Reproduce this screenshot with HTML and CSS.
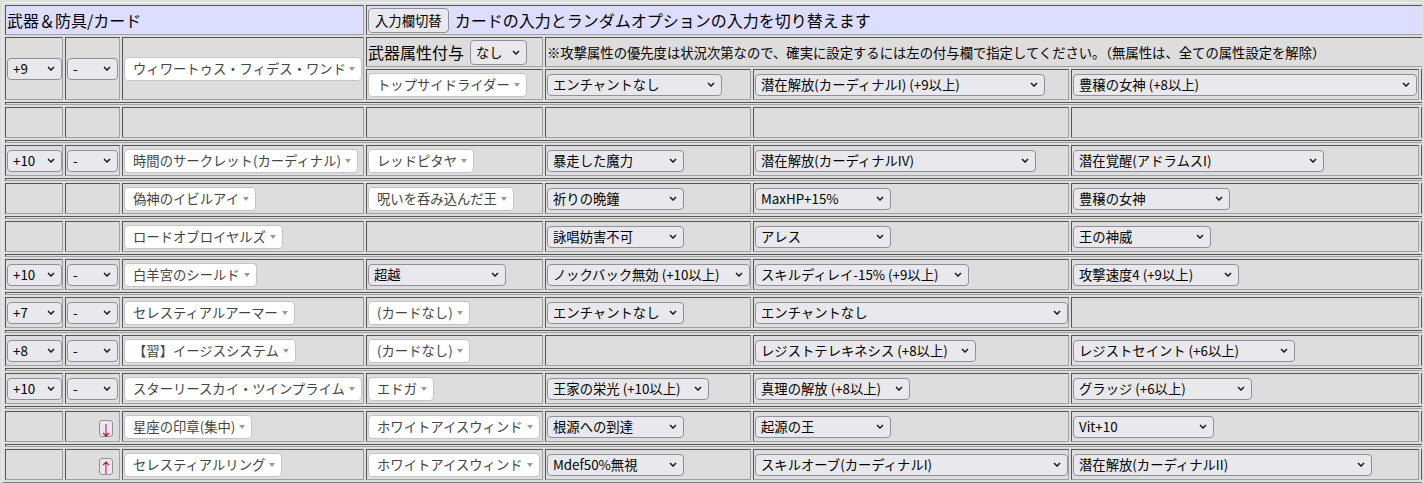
FILE: index.html
```html
<!DOCTYPE html>
<html>
<head>
    <meta charset="utf-8">
    <title>武器＆防具/カード</title>
    <link rel="stylesheet" href="styles.css">
</head>
<body>
    <div class="equip">
        <div class="cell head span3">武器＆防具/カード</div>
        <div class="cell head span5"><span class="btn">入力欄切替</span>カードの入力とランダムオプションの入力を切り替えます</div>

        <!-- 武器 -->
        <div class="cell rs"><span class="sel" style="width:55px">+9<svg class="chev" viewBox="0 0 8 5"><path d="M1 1l3 3 3-3"/></svg></span></div>
        <div class="cell rs"><span class="sel" style="width:51px">-<svg class="chev" viewBox="0 0 8 5"><path d="M1 1l3 3 3-3"/></svg></span></div>
        <div class="cell rs"><span class="dd"><span class="txt">ウィワートゥス・フィデス・ワンド</span><i class="tri"></i></span></div>
        <div class="cell h30 label">武器属性付与<span class="sel tall" style="width:57px">なし<svg class="chev" viewBox="0 0 8 5"><path d="M1 1l3 3 3-3"/></svg></span></div>
        <div class="cell h30 note span4">※攻撃属性の優先度は状況次第なので、確実に設定するには左の付与欄で指定してください。（無属性は、全ての属性設定を解除）</div>
        <div class="cell"><span class="dd"><span class="txt">トップサイドライダー</span><i class="tri"></i></span></div>
        <div class="cell"><span class="sel" style="width:175px">エンチャントなし<svg class="chev" viewBox="0 0 8 5"><path d="M1 1l3 3 3-3"/></svg></span></div>
        <div class="cell"><span class="sel" style="width:290px">潜在解放(カーディナルI) (+9以上)<svg class="chev" viewBox="0 0 8 5"><path d="M1 1l3 3 3-3"/></svg></span></div>
        <div class="cell"><span class="sel" style="width:344px">豊穣の女神 (+8以上)<svg class="chev" viewBox="0 0 8 5"><path d="M1 1l3 3 3-3"/></svg></span></div>
        <div class="cell"></div>
        <div class="sep"></div>

        <!-- 空欄 -->
        <div class="cell"></div>
        <div class="cell"></div>
        <div class="cell"></div>
        <div class="cell"></div>
        <div class="cell"></div>
        <div class="cell"></div>
        <div class="cell"></div>
        <div class="cell"></div>
        <div class="sep"></div>

        <!-- 頭上段 -->
        <div class="cell"><span class="sel" style="width:55px">+10<svg class="chev" viewBox="0 0 8 5"><path d="M1 1l3 3 3-3"/></svg></span></div>
        <div class="cell"><span class="sel" style="width:51px">-<svg class="chev" viewBox="0 0 8 5"><path d="M1 1l3 3 3-3"/></svg></span></div>
        <div class="cell"><span class="dd"><span class="txt">時間のサークレット(カーディナル)</span><i class="tri"></i></span></div>
        <div class="cell"><span class="dd"><span class="txt">レッドピタヤ</span><i class="tri"></i></span></div>
        <div class="cell"><span class="sel" style="width:137px">暴走した魔力<svg class="chev" viewBox="0 0 8 5"><path d="M1 1l3 3 3-3"/></svg></span></div>
        <div class="cell"><span class="sel" style="width:281px">潜在解放(カーディナルIV)<svg class="chev" viewBox="0 0 8 5"><path d="M1 1l3 3 3-3"/></svg></span></div>
        <div class="cell"><span class="sel" style="width:251px">潜在覚醒(アドラムスI)<svg class="chev" viewBox="0 0 8 5"><path d="M1 1l3 3 3-3"/></svg></span></div>
        <div class="cell"></div>
        <div class="sep"></div>

        <!-- 頭中段 -->
        <div class="cell"></div>
        <div class="cell"></div>
        <div class="cell"><span class="dd"><span class="txt">偽神のイビルアイ</span><i class="tri"></i></span></div>
        <div class="cell"><span class="dd"><span class="txt">呪いを呑み込んだ王</span><i class="tri"></i></span></div>
        <div class="cell"><span class="sel" style="width:137px">祈りの晩鐘<svg class="chev" viewBox="0 0 8 5"><path d="M1 1l3 3 3-3"/></svg></span></div>
        <div class="cell"><span class="sel" style="width:136px">MaxHP+15%<svg class="chev" viewBox="0 0 8 5"><path d="M1 1l3 3 3-3"/></svg></span></div>
        <div class="cell"><span class="sel" style="width:157px">豊穣の女神<svg class="chev" viewBox="0 0 8 5"><path d="M1 1l3 3 3-3"/></svg></span></div>
        <div class="cell"></div>
        <div class="sep"></div>

        <!-- 頭下段 -->
        <div class="cell"></div>
        <div class="cell"></div>
        <div class="cell"><span class="dd"><span class="txt">ロードオブロイヤルズ</span><i class="tri"></i></span></div>
        <div class="cell"></div>
        <div class="cell"><span class="sel" style="width:137px">詠唱妨害不可<svg class="chev" viewBox="0 0 8 5"><path d="M1 1l3 3 3-3"/></svg></span></div>
        <div class="cell"><span class="sel" style="width:136px">アレス<svg class="chev" viewBox="0 0 8 5"><path d="M1 1l3 3 3-3"/></svg></span></div>
        <div class="cell"><span class="sel" style="width:138px">王の神威<svg class="chev" viewBox="0 0 8 5"><path d="M1 1l3 3 3-3"/></svg></span></div>
        <div class="cell"></div>
        <div class="sep"></div>

        <!-- 盾 -->
        <div class="cell"><span class="sel" style="width:55px">+10<svg class="chev" viewBox="0 0 8 5"><path d="M1 1l3 3 3-3"/></svg></span></div>
        <div class="cell"><span class="sel" style="width:51px">-<svg class="chev" viewBox="0 0 8 5"><path d="M1 1l3 3 3-3"/></svg></span></div>
        <div class="cell"><span class="dd"><span class="txt">白羊宮のシールド</span><i class="tri"></i></span></div>
        <div class="cell"><span class="sel" style="width:138px">超越<svg class="chev" viewBox="0 0 8 5"><path d="M1 1l3 3 3-3"/></svg></span></div>
        <div class="cell"><span class="sel" style="width:203px">ノックバック無効 (+10以上)<svg class="chev" viewBox="0 0 8 5"><path d="M1 1l3 3 3-3"/></svg></span></div>
        <div class="cell"><span class="sel" style="width:214px">スキルディレイ-15% (+9以上)<svg class="chev" viewBox="0 0 8 5"><path d="M1 1l3 3 3-3"/></svg></span></div>
        <div class="cell"><span class="sel" style="width:166px">攻撃速度4 (+9以上)<svg class="chev" viewBox="0 0 8 5"><path d="M1 1l3 3 3-3"/></svg></span></div>
        <div class="cell"></div>
        <div class="sep"></div>

        <!-- 鎧 -->
        <div class="cell"><span class="sel" style="width:55px">+7<svg class="chev" viewBox="0 0 8 5"><path d="M1 1l3 3 3-3"/></svg></span></div>
        <div class="cell"><span class="sel" style="width:51px">-<svg class="chev" viewBox="0 0 8 5"><path d="M1 1l3 3 3-3"/></svg></span></div>
        <div class="cell"><span class="dd"><span class="txt">セレスティアルアーマー</span><i class="tri"></i></span></div>
        <div class="cell"><span class="dd"><span class="txt">(カードなし)</span><i class="tri"></i></span></div>
        <div class="cell"><span class="sel" style="width:137px">エンチャントなし<svg class="chev" viewBox="0 0 8 5"><path d="M1 1l3 3 3-3"/></svg></span></div>
        <div class="cell"><span class="sel" style="width:313px">エンチャントなし<svg class="chev" viewBox="0 0 8 5"><path d="M1 1l3 3 3-3"/></svg></span></div>
        <div class="cell"></div>
        <div class="cell"></div>
        <div class="sep"></div>

        <!-- 肩 -->
        <div class="cell"><span class="sel" style="width:55px">+8<svg class="chev" viewBox="0 0 8 5"><path d="M1 1l3 3 3-3"/></svg></span></div>
        <div class="cell"><span class="sel" style="width:51px">-<svg class="chev" viewBox="0 0 8 5"><path d="M1 1l3 3 3-3"/></svg></span></div>
        <div class="cell"><span class="dd"><span class="txt">【習】イージスシステム</span><i class="tri"></i></span></div>
        <div class="cell"><span class="dd"><span class="txt">(カードなし)</span><i class="tri"></i></span></div>
        <div class="cell"></div>
        <div class="cell"><span class="sel" style="width:221px">レジストテレキネシス (+8以上)<svg class="chev" viewBox="0 0 8 5"><path d="M1 1l3 3 3-3"/></svg></span></div>
        <div class="cell"><span class="sel" style="width:222px">レジストセイント (+6以上)<svg class="chev" viewBox="0 0 8 5"><path d="M1 1l3 3 3-3"/></svg></span></div>
        <div class="cell"></div>
        <div class="sep"></div>

        <!-- 靴 -->
        <div class="cell"><span class="sel" style="width:55px">+10<svg class="chev" viewBox="0 0 8 5"><path d="M1 1l3 3 3-3"/></svg></span></div>
        <div class="cell"><span class="sel" style="width:51px">-<svg class="chev" viewBox="0 0 8 5"><path d="M1 1l3 3 3-3"/></svg></span></div>
        <div class="cell"><span class="dd"><span class="txt">スターリースカイ・ツインプライム</span><i class="tri"></i></span></div>
        <div class="cell"><span class="dd"><span class="txt">エドガ</span><i class="tri"></i></span></div>
        <div class="cell"><span class="sel" style="width:162px">王家の栄光 (+10以上)<svg class="chev" viewBox="0 0 8 5"><path d="M1 1l3 3 3-3"/></svg></span></div>
        <div class="cell"><span class="sel" style="width:155px">真理の解放 (+8以上)<svg class="chev" viewBox="0 0 8 5"><path d="M1 1l3 3 3-3"/></svg></span></div>
        <div class="cell"><span class="sel" style="width:179px">グラッジ (+6以上)<svg class="chev" viewBox="0 0 8 5"><path d="M1 1l3 3 3-3"/></svg></span></div>
        <div class="cell"></div>
        <div class="sep"></div>

        <!-- アクセサリー1 -->
        <div class="cell"></div>
        <div class="cell"><span class="mv">↓</span></div>
        <div class="cell"><span class="dd"><span class="txt">星座の印章(集中)</span><i class="tri"></i></span></div>
        <div class="cell"><span class="dd"><span class="txt">ホワイトアイスウィンド</span><i class="tri"></i></span></div>
        <div class="cell"><span class="sel" style="width:137px">根源への到達<svg class="chev" viewBox="0 0 8 5"><path d="M1 1l3 3 3-3"/></svg></span></div>
        <div class="cell"><span class="sel" style="width:136px">起源の王<svg class="chev" viewBox="0 0 8 5"><path d="M1 1l3 3 3-3"/></svg></span></div>
        <div class="cell"><span class="sel" style="width:141px">Vit+10<svg class="chev" viewBox="0 0 8 5"><path d="M1 1l3 3 3-3"/></svg></span></div>
        <div class="cell"></div>
        <div class="sep"></div>

        <!-- アクセサリー2 -->
        <div class="cell"></div>
        <div class="cell"><span class="mv">↑</span></div>
        <div class="cell"><span class="dd"><span class="txt">セレスティアルリング</span><i class="tri"></i></span></div>
        <div class="cell"><span class="dd"><span class="txt">ホワイトアイスウィンド</span><i class="tri"></i></span></div>
        <div class="cell"><span class="sel" style="width:137px">Mdef50%無視<svg class="chev" viewBox="0 0 8 5"><path d="M1 1l3 3 3-3"/></svg></span></div>
        <div class="cell"><span class="sel" style="width:313px">スキルオーブ(カーディナルI)<svg class="chev" viewBox="0 0 8 5"><path d="M1 1l3 3 3-3"/></svg></span></div>
        <div class="cell"><span class="sel" style="width:299px">潜在解放(カーディナルII)<svg class="chev" viewBox="0 0 8 5"><path d="M1 1l3 3 3-3"/></svg></span></div>
        <div class="cell"></div>
    </div>
</body>
</html>
```

FILE: styles.css
```css
body {
    margin: 2px;
    background-color: #dddddd;
    font-family: "Noto Sans CJK JP", sans-serif;
    font-size: 16px;
    color: #000;
    overflow: hidden;
}
.equip {
    display: grid;
    grid-template-columns: 58px 55px 242px 177px 206px 316px 348px 150px;
    gap: 2px;
    width: max-content;
    padding: 2px;
    border: 1px solid;
    border-color: #eeeeee #808080 #808080 #eeeeee;
    background-color: #dddddd;
}
.cell {
    box-sizing: border-box;
    height: 31px;
    padding: 0 1px;
    border: 1px solid;
    border-color: #555 #a0a0a0 #a0a0a0 #555;
    display: flex;
    align-items: center;
    white-space: nowrap;
    overflow: hidden;
    min-width: 0;
}
.h30 {
    height: 30px;
}
.rs {
    grid-row: span 2;
    height: auto;
}
.span3 {
    grid-column: span 3;
}
.span4 {
    grid-column: span 4;
}
.span5 {
    grid-column: span 5;
}
.head {
    height: 30px;
    background-color: #ddddff;
}
.note {
    font-size: 13.33px;
}
.label .sel {
    margin-left: 6px;
}
.sep {
    grid-column: 1 / -1;
    box-sizing: border-box;
    height: 3px;
    border: 1px solid;
    border-color: #555 #a0a0a0 #a0a0a0 #555;
}

/* native looking select */
.sel {
    box-sizing: border-box;
    display: flex;
    align-items: center;
    justify-content: space-between;
    flex-shrink: 0;
    height: 22px;
    padding: 0 6px 0 5px;
    border: 1px solid #8f8f9d;
    border-radius: 4px;
    background-color: #e9e9ed;
    font-size: 13.33px;
    color: #000;
}
.sel.tall {
    height: 25px;
}
.chev {
    width: 8px;
    height: 5px;
    flex-shrink: 0;
    fill: none;
    stroke: #1a1a1a;
    stroke-width: 1.5;
}

/* search dropdown (white) */
.dd {
    box-sizing: border-box;
    display: flex;
    align-items: center;
    max-width: 100%;
    height: 24px;
    padding: 0 6px 0 8px;
    border: 1px solid #c4c4c4;
    border-radius: 4px;
    background-color: #fff;
    color: #444;
    font-size: 13.33px;
}
.dd .txt {
    overflow: hidden;
}
.tri {
    flex-shrink: 0;
    margin-left: 4px;
    border-style: solid;
    border-width: 4px 3.5px 0 3.5px;
    border-color: #999 transparent transparent transparent;
}

.btn {
    box-sizing: border-box;
    display: flex;
    align-items: center;
    height: 25px;
    margin-right: 6px;
    padding: 0 6px;
    border: 1px solid #8f8f9d;
    border-radius: 4px;
    background-color: #e9e9ed;
    font-size: 13.33px;
}
.mv {
    box-sizing: border-box;
    display: flex;
    align-items: center;
    justify-content: center;
    width: 14px;
    height: 17px;
    margin: 4px 5px 0 auto;
    border: 1px solid #8f8f9d;
    border-radius: 3px;
    background-color: #e9e9ed;
    color: #cc0000;
    font-size: 14px;
    line-height: 1;
    overflow: visible;
}
```
